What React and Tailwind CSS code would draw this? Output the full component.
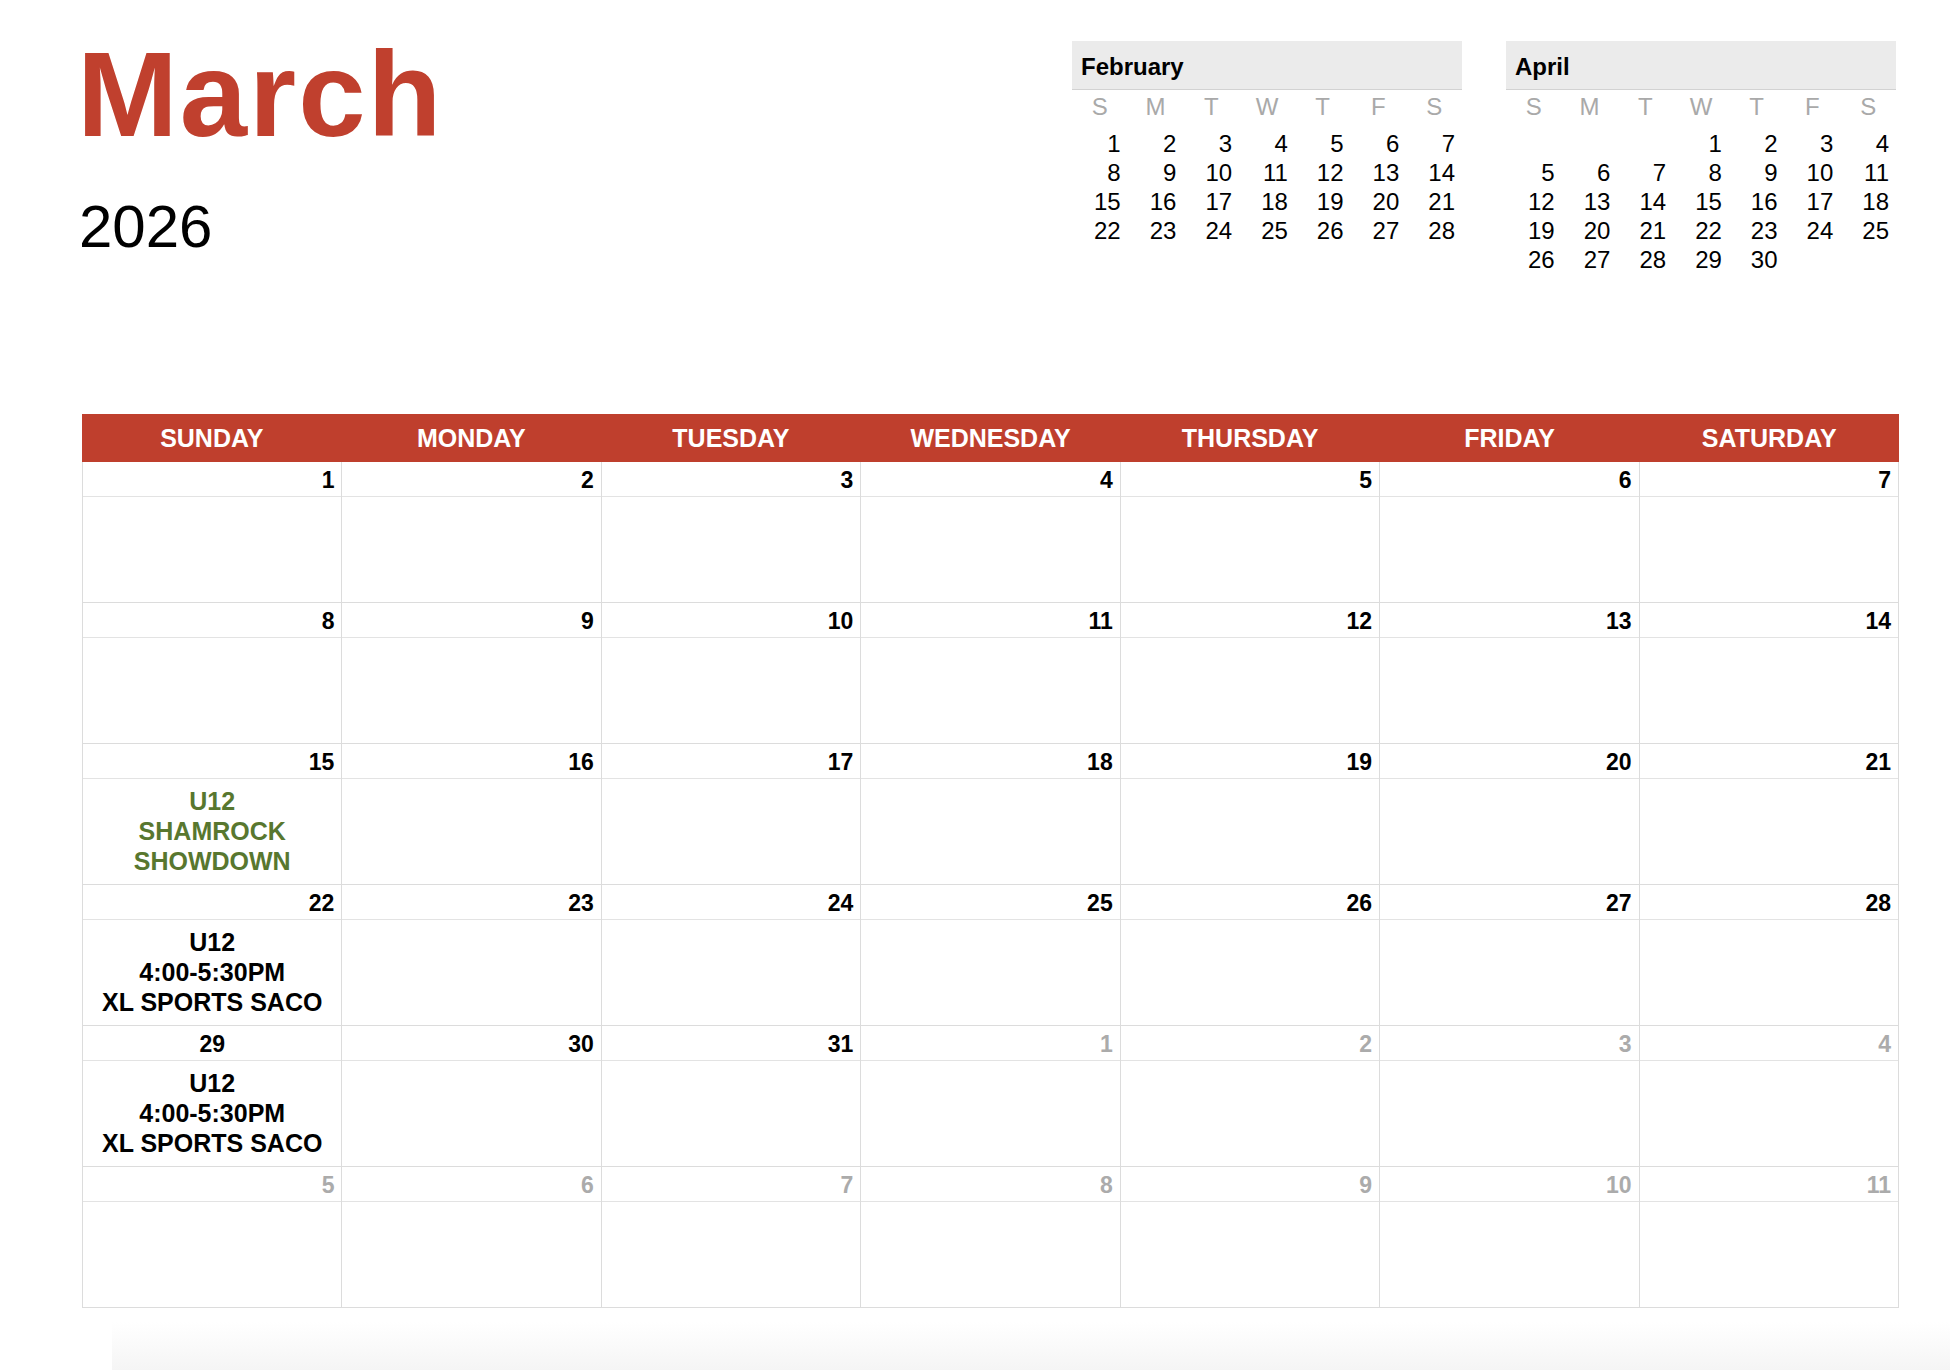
import React from "react";

const FEB = [
  [1, 2, 3, 4, 5, 6, 7],
  [8, 9, 10, 11, 12, 13, 14],
  [15, 16, 17, 18, 19, 20, 21],
  [22, 23, 24, 25, 26, 27, 28],
];
const APR = [
  [null, null, null, 1, 2, 3, 4],
  [5, 6, 7, 8, 9, 10, 11],
  [12, 13, 14, 15, 16, 17, 18],
  [19, 20, 21, 22, 23, 24, 25],
  [26, 27, 28, 29, 30, null, null],
];

function Mini({ name, weeks }) {
  return (
    <div className="w-[390px]">
      <div className="h-[49px] bg-[#ebebeb] border-b border-[#d2d2d2] pl-[9px] pt-[14px] text-[24px] font-bold leading-none text-black">
        {name}
      </div>
      <div className="grid grid-cols-7 mt-[2px] h-[30px] leading-[30px] text-[24px] text-[#a9a9a9] text-center">
        {["S", "M", "T", "W", "T", "F", "S"].map((d, i) => (
          <div key={i}>{d}</div>
        ))}
      </div>
      <div className="mt-[7px] grid grid-cols-7 text-[24px] leading-[29px] text-right text-black">
        {weeks.flat().map((d, i) => (
          <div key={i} className="pr-[7px] h-[29px]">
            {d ?? ""}
          </div>
        ))}
      </div>
    </div>
  );
}

const DAYS = ["SUNDAY", "MONDAY", "TUESDAY", "WEDNESDAY", "THURSDAY", "FRIDAY", "SATURDAY"];

const EVENT_PRACTICE = ["U12", "4:00-5:30PM", "XL SPORTS SACO"];

const CELLS = [];
for (let d = 1; d <= 31; d++) CELLS.push({ n: d, cur: true });
for (let d = 1; d <= 11; d++) CELLS.push({ n: d, cur: false });

function Cell({ c }) {
  let events = null;
  let green = false;
  if (c.cur && c.n === 15) {
    events = ["U12", "SHAMROCK", "SHOWDOWN"];
    green = true;
  } else if (c.cur && (c.n === 22 || c.n === 29)) {
    events = EVENT_PRACTICE;
  }
  const centered = c.cur && c.n === 29;
  return (
    <div className="h-[141px] border-r border-b border-[#dcdcdc] flex flex-col">
      <div
        className={
          "h-[35px] border-b border-[#e3e3e3] flex items-center pt-[3px] text-[23px] font-bold leading-none " +
          (centered ? "justify-center " : "justify-end pr-[7px] ") +
          (c.cur ? "text-black" : "text-[#ababab]")
        }
      >
        {c.n}
      </div>
      <div
        className={
          "flex-1 pt-[7px] text-center text-[25px] font-bold leading-[30px] " +
          (green ? "text-[#58772f]" : "text-black")
        }
      >
        {events && events.map((e, i) => <div key={i}>{e}</div>)}
      </div>
    </div>
  );
}

export default function App() {
  return (
    <div className="w-[1950px] h-[1370px] bg-white overflow-hidden font-['Liberation_Sans','Arial',sans-serif]">
      <div className="pl-[82px] pr-[51px]">
        <div className="flex justify-between h-[414px]">
          <div className="pt-[34px] -ml-[5px]">
            <div className="text-[121px] font-bold leading-none tracking-[2px] text-[#c0402e]">March</div>
            <div className="mt-[42px] ml-[2px] text-[60px] leading-none text-black">2026</div>
          </div>
          <div className="flex gap-[44px] pt-[41px] mr-[3px]">
            <Mini name="February" weeks={FEB} />
            <Mini name="April" weeks={APR} />
          </div>
        </div>
        <div className="w-[1817px]">
          <div className="grid grid-cols-7 h-[48px] bg-[#bf3f2d]">
            {DAYS.map((d) => (
              <div key={d} className="flex items-center justify-center text-white font-bold text-[25px] leading-none">
                {d}
              </div>
            ))}
          </div>
          <div className="grid grid-cols-7 border-l border-[#dcdcdc]">
            {CELLS.map((c, i) => (
              <Cell key={i} c={c} />
            ))}
          </div>
        </div>
        <div className="mt-[14px] ml-[30px] -mr-[51px] h-[48px] bg-linear-to-b from-white to-[#f5f5f5]" />
      </div>
    </div>
  );
}
